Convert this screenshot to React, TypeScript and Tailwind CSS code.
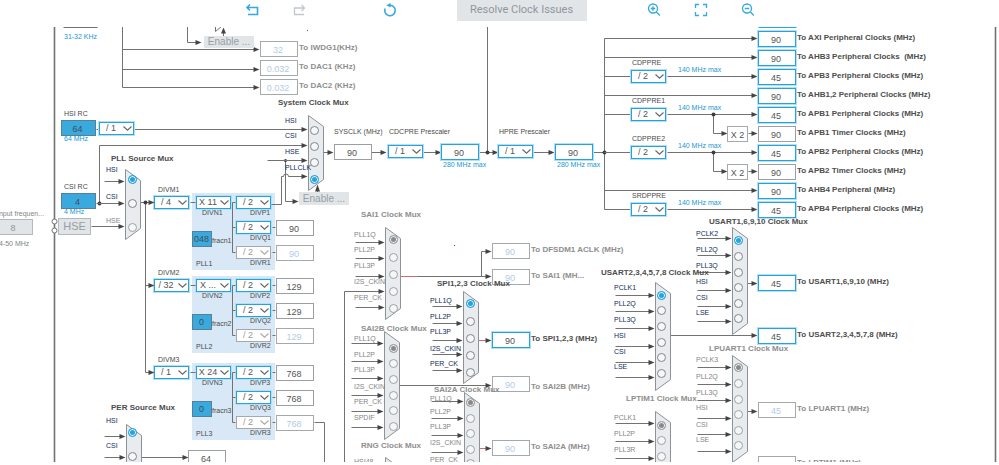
import React from "react";

type Tone = "blue" | "grey" | "off" | "fill" | "muted";

const TEXT = {
  title: "text-[8px] font-bold text-[#4d4d4d]",
  titleOff: "text-[8px] font-bold text-[#8e8e8e]",
  small: "text-[7px] text-[#4a4a4a]",
  smallOff: "text-[7px] text-[#858585]",
  navy: "text-[7px] text-[#122c5a]",
  hint: "text-[7px] text-[#1797d3]",
};

/* Text placed on the canvas; y is the vertical centre of the line. */
function Text({
  x,
  y,
  kind,
  htmlFor,
  children,
}: {
  x: number;
  y: number;
  kind: keyof typeof TEXT;
  htmlFor?: string;
  children: React.ReactNode;
}) {
  const className = `absolute z-10 leading-[10px] whitespace-pre ${TEXT[kind]}`;
  const style = { left: x, top: y - 5 };
  return htmlFor ? (
    <label htmlFor={htmlFor} className={className} style={style}>
      {children}
    </label>
  ) : (
    <span className={className} style={style}>
      {children}
    </span>
  );
}

const BOX: Record<Tone, string> = {
  blue: "w-[38px] border-[#25a3dd] bg-white text-[#555555] shadow-[0_0_0_1px_#b5dff3]",
  grey: "w-[38px] border-[#9a9fa3] bg-white text-[#555555]",
  off: "w-[38px] border-[#a3a9ad] bg-white text-[#b3cbe6]",
  fill: "w-[35px] border-[#587f94] bg-[#3aa9dd] text-[#3f4f5a]",
  muted: "w-[38px] border-[#b4b9bd] bg-[#e1e5e8] text-[#8e9499]",
};

function Box({ id, tone, value, label }: { id?: string; tone: Tone; value: string; label?: string }) {
  return (
    <input
      id={id}
      aria-label={label}
      defaultValue={value}
      disabled={tone === "off" || tone === "muted"}
      className={`block h-4 shrink-0 border pt-px pr-[2px] text-center text-[9px] leading-none ${BOX[tone]}`}
    />
  );
}

function Divider({ id, value, off }: { id: string; value: string; off?: boolean }) {
  return (
    <div className="relative h-[13px] w-[35px] shrink-0">
      <select
        id={id}
        disabled={off}
        defaultValue={value}
        className={`block h-full w-full appearance-none border bg-white pr-[11px] text-center text-[9px] leading-none opacity-100 [text-align-last:center] ${
          off
            ? "border-[#a3a9ad] text-[#9a9a9a]"
            : "border-[#25a3dd] text-[#555555] shadow-[0_0_0_1px_#b5dff3]"
        }`}
      >
        <option>{value}</option>
      </select>
      <svg
        viewBox="0 0 9 5"
        className={`pointer-events-none absolute top-1 right-[2px] h-[5px] w-[9px] ${
          off ? "text-[#a9a9a9]" : "text-[#666666]"
        }`}
      >
        <path d="M0.5 0.5 L4.5 4.2 L8.5 0.5" fill="none" stroke="currentColor" strokeWidth="1.1" />
      </svg>
    </div>
  );
}

/* A node of the diagram: its parts are stacked from the given corner. */
function Node({
  x,
  y,
  className = "flex-col",
  children,
}: {
  x: number;
  y: number;
  className?: string;
  children: React.ReactNode;
}) {
  return (
    <div className={`absolute flex whitespace-pre ${className}`} style={{ left: x, top: y }}>
      {children}
    </div>
  );
}

/* name, label y, wire y, radio y, optional wire start */
type Row = [string, number, number, number, number?];

type MuxData = {
  id: string;
  title: string;
  tx: number;
  ty: number;
  x: number;
  top: number;
  bottom: number;
  cx: number;
  lx: number;
  from: number;
  sel: number;
  off?: boolean;
  rows: Row[];
};

const MUXES: MuxData[] = [
  {
    id: "system", title: "System Clock Mux", tx: 278, ty: 103, x: 308, top: 115, bottom: 190, cx: 314, lx: 285, from: 134, sel: 3,
    rows: [["HSI", 121, 129, 130], ["CSI", 136, 145, 146, 99], ["HSE", 152, 160, 162, 267], ["PLLCLK", 168, 176, 179, 288]],
  },
  {
    id: "pll", title: "PLL Source Mux", tx: 111, ty: 159, x: 125, top: 169, bottom: 239, cx: 132, lx: 106, from: 104, sel: 0,
    rows: [["HSI", 170, 181, 179], ["CSI", 197, 203, 203, 96], ["HSE", 221, 226, 227, 91]],
  },
  {
    id: "per", title: "PER Source Mux", tx: 111, ty: 408, x: 126, top: 424, bottom: 495, cx: 132, lx: 106, from: 104, sel: 0,
    rows: [["HSI", 421, 436, 432], ["CSI", 446, 457, 456]],
  },
  {
    id: "sai1", title: "SAI1 Clock Mux", tx: 361, ty: 215, x: 385, top: 227, bottom: 319, cx: 393, lx: 354, from: 355, sel: 0, off: true,
    rows: [["PLL1Q", 235, 242, 239], ["PLL2P", 250, 258, 257], ["PLL3P", 266, 276, 274], ["I2S_CKIN", 282, 291, 291, 344], ["PER_CK", 298, 307, 308]],
  },
  {
    id: "sai2b", title: "SAI2B Clock Mux", tx: 361, ty: 329, x: 384, top: 331, bottom: 439, cx: 393, lx: 354, from: 351, sel: 0, off: true,
    rows: [["PLL1Q", 339, 343, 348], ["PLL2P", 355, 361, 363], ["PLL3P", 370, 378, 379], ["I2S_CKIN", 387, 395, 395], ["PER_CK", 402, 411, 410], ["SPDIF", 418, 427, 426]],
  },
  {
    id: "rng", title: "RNG Clock Mux", tx: 361, ty: 446, x: 385, top: 457, bottom: 530, cx: 393, lx: 354, from: 355, sel: 0, off: true,
    rows: [["HSI48", 462, 470, 470]],
  },
  {
    id: "spi", title: "SPI1,2,3 Clock Mux", tx: 437, ty: 284, x: 463, top: 291, bottom: 383, cx: 470, lx: 430, from: 432, sel: 0,
    rows: [["PLL1Q", 301, 306, 303], ["PLL2P", 317, 323, 321], ["PLL3P", 332, 340, 338], ["I2S_CKIN", 349, 354, 355], ["PER_CK", 364, 370, 372]],
  },
  {
    id: "sai2a", title: "SAI2A Clock Mux", tx: 434, ty: 390, x: 464, top: 392, bottom: 500, cx: 470, lx: 430, from: 431, sel: 0, off: true,
    rows: [["PLL1Q", 399, 401, 402], ["PLL2P", 412, 418, 418], ["PLL3P", 427, 435, 433], ["I2S_CKIN", 443, 452, 449], ["PER_CK", 460, 469, 463]],
  },
  {
    id: "usart2", title: "USART2,3,4,5,7,8 Clock Mux", tx: 601, ty: 273, x: 655, top: 282, bottom: 390, cx: 661, lx: 614, from: 615, sel: 0,
    rows: [["PCLK1", 288, 295, 295], ["PLL2Q", 304, 311, 310], ["PLL3Q", 320, 328, 326], ["HSI", 336, 346, 342], ["CSI", 352, 362, 357], ["LSE", 367, 377, 373]],
  },
  {
    id: "usart1", title: "USART1,6,9,10 Clock Mux", tx: 709, ty: 222, x: 732, top: 227, bottom: 334, cx: 738, lx: 696, from: 697, sel: 0,
    rows: [["PCLK2", 234, 238, 240], ["PLL2Q", 250, 255, 256], ["PLL3Q", 266, 272, 272], ["HSI", 282, 290, 287], ["CSI", 298, 306, 303], ["LSE", 313, 321, 318]],
  },
  {
    id: "lpuart1", title: "LPUART1 Clock Mux", tx: 709, ty: 349, x: 732, top: 355, bottom: 462, cx: 738, lx: 696, from: 697, sel: 0, off: true,
    rows: [["PCLK3", 360, 367, 367], ["PLL2Q", 377, 384, 383], ["PLL3Q", 393, 400, 399], ["HSI", 408, 418, 414], ["CSI", 425, 434, 430], ["LSE", 440, 451, 445]],
  },
  {
    id: "lptim1", title: "LPTIM1 Clock Mux", tx: 626, ty: 399, x: 655, top: 411, bottom: 518, cx: 661, lx: 614, from: 615, sel: 0, off: true,
    rows: [["PCLK1", 418, 423, 425], ["PLL2P", 434, 441, 440], ["PLL3R", 450, 458, 456]],
  },
];

/* text, x, y, value, tone */
const OUTPUTS: [string, number, number, string, Tone][] = [
  ["To IWDG1(KHz)", 260, 41, "32", "off"],
  ["To DAC1 (KHz)", 260, 60, "0.032", "off"],
  ["To DAC2 (KHz)", 260, 79, "0.032", "off"],
  ["To AXI Peripheral Clocks (MHz)", 758, 31, "90", "blue"],
  ["To AHB3 Peripheral Clocks  (MHz)", 758, 50, "90", "blue"],
  ["To APB3 Peripheral Clocks (MHz)", 758, 69, "45", "blue"],
  ["To AHB1,2 Peripheral Clocks (MHz)", 758, 88, "90", "blue"],
  ["To APB1 Peripheral Clocks (MHz)", 758, 107, "45", "blue"],
  ["To APB1 Timer Clocks (MHz)", 758, 126, "90", "grey"],
  ["To APB2 Peripheral Clocks (MHz)", 758, 145, "45", "blue"],
  ["To APB2 Timer Clocks (MHz)", 758, 164, "90", "grey"],
  ["To AHB4 Peripheral (MHz)", 758, 183, "90", "blue"],
  ["To APB4 Peripheral Clocks (MHz)", 758, 202, "45", "blue"],
  ["To USART1,6,9,10 (MHz)", 758, 275, "45", "blue"],
  ["To USART2,3,4,5,7,8 (MHz)", 758, 328, "45", "blue"],
  ["To LPUART1 (MHz)", 758, 402, "45", "off"],
  ["To LPTIM1 (MHz)", 758, 456, "45", "off"],
  ["To DFSDM1 ACLK (MHz)", 492, 243, "90", "off"],
  ["To SAI1 (MH...", 492, 269, "90", "off"],
  ["To SPI1,2,3 (MHz)", 492, 332, "90", "blue"],
  ["To SAI2B (MHz)", 492, 376, "90", "off"],
  ["To SAI2A (MHz)", 492, 440, "90", "off"],
];

/* Divider labels, centres and results of each PLL block */
const PLLS = [
  { n: 1, top: 193, m: "/ 4", mult: "X 11", frac: "048", results: ["", "90", "90"] },
  { n: 2, top: 276, m: "/ 32", mult: "X ...", frac: "0", results: ["129", "129", "129"] },
  { n: 3, top: 363, m: "/ 1", mult: "X 24", frac: "0", results: ["768", "768", "768"] },
];

/* label, x, y of the label, value, gap under the label */
const PRESCALERS: [string, number, number, string, string][] = [
  ["CDCPRE Prescaler", 388, 127, "/ 1", "gap-2"],
  ["HPRE Prescaler", 498, 127, "/ 1", "gap-2"],
  ["CDPPRE", 631, 58, "/ 2", "gap-[2px]"],
  ["CDPPRE1", 631, 96, "/ 2", "gap-[2px]"],
  ["CDPPRE2", 631, 134, "/ 2", "gap-[2px]"],
  ["SRDPPRE", 631, 191, "/ 2", "gap-[2px]"],
];

const HINTS: [string, number, number][] = [
  ["31-32 KHz", 64, 37],
  ["280 MHz max", 443, 165],
  ["280 MHz max", 557, 165],
  ["140 MHz max", 678, 70],
  ["140 MHz max", 678, 108],
  ["140 MHz max", 678, 146],
  ["140 MHz max", 678, 203],
];

/* Wires from the HPRE bus: plain branches and those through a divider */
const BRANCHES = [38, 57, 95, 190];
const DIVIDED = [76, 114, 152, 209];

function Arrow({ from, to, y }: { from: number; to: number; y: number }) {
  return (
    <>
      <path d={`M${from} ${y}H${to - 4}`} />
      <path d={`M${to} ${y}l-6 -2.5v5z`} fill="#444444" stroke="none" />
    </>
  );
}

function Dot({ x, y, r = 2 }: { x: number; y: number; r?: number }) {
  return <circle cx={x} cy={y} r={r} fill="#3d3d3d" stroke="none" />;
}

function Wires() {
  return (
    <svg
      width="999"
      height="480"
      viewBox="0 0 999 480"
      className="pointer-events-none absolute top-0 left-0 overflow-visible"
    >
      <g transform="translate(0.5 0.5)" fill="none" stroke="#727272" strokeWidth="1">
        <path d="M54 20V480M995 20V480" strokeWidth="1.6" />
        <path d="M63 27H97" />
        <path d="M758 27H796" stroke="#25a3dd" />
        <path d="M122 20V87" />
        <Arrow from={122} to={259} y={49} />
        <Arrow from={122} to={259} y={69} />
        <Arrow from={122} to={259} y={87} />
        <path d="M187 20V42" />
        <Arrow from={187} to={201} y={42} />
        <path d="M215 20V31L221 26M223 36V30" />
        <path d="M223 27l-2.5 6h5z" fill="#444444" stroke="none" />

        <path d="M96 129H99M99 145V203" />
        <path d="M285 160V201" />
        <Arrow from={285} to={298} y={201} />
        <path d="M271 204H281V176H283a2.5 2.5 0 0 1 5 0" />
        <path d="M317 192V188" />
        <path d="M317 184l-2.5 7h5z" fill="#444444" stroke="none" />
        <Dot x={285} y={160} r={1.5} />
        <Dot x={99} y={203} />

        <Arrow from={323} to={333} y={152} />
        <Arrow from={371} to={386} y={152} />
        <Arrow from={423} to={441} y={152} />
        <Arrow from={479} to={498} y={152} />
        <Arrow from={533} to={554} y={152} />
        <path d="M487 20V152M593 152H604M604 38V209" />
        <Dot x={487} y={152} />
        <Dot x={604} y={152} />
        {BRANCHES.map((y) => (
          <Arrow key={y} from={604} to={757} y={y} />
        ))}
        {DIVIDED.map((y) => (
          <g key={y}>
            <path d={`M604 ${y}H630`} />
            <Arrow from={667} to={757} y={y} />
          </g>
        ))}
        <path d="M713 114V133M713 152V171" />
        <Dot x={713} y={114} />
        <Dot x={713} y={152} />
        <Arrow from={713} to={727} y={133} />
        <Arrow from={713} to={727} y={171} />
        <Arrow from={748} to={757} y={133} />
        <Arrow from={748} to={757} y={171} />

        <Arrow from={140} to={154} y={202} />
        <path d="M145 202V372" />
        <Arrow from={145} to={154} y={285} />
        <Arrow from={145} to={154} y={372} />
        <Dot x={145} y={202} />
        {PLLS.map((p) => {
          const y = p.top + 9;
          return (
            <g key={p.n}>
              <path d={`M190 ${y}H195M232 ${y}H235M232 ${y}V${y + 50}`} />
              <path d={`M232 ${y + 25}H235M232 ${y + 50}H235`} />
              <path d={`M272 ${y + 25}H275M272 ${y + 50}H275`} />
              {p.results[0] && <path d={`M272 ${y}H275`} />}
            </g>
          );
        })}
        <path d="M314 422H324V480M344 291V480" />
        <Arrow from={140} to={188} y={457} />

        <path d="M400 276H416" stroke="#cf6d78" />
        <Arrow from={416} to={491} y={276} />
        <path d="M481 276V251" />
        <Arrow from={481} to={491} y={251} />
        <path d="M478 340H486M479 448H486" stroke="#cf6d78" />
        <Arrow from={486} to={491} y={340} />
        <Arrow from={486} to={491} y={448} />
        <Arrow from={399} to={491} y={385} />
        <Arrow from={747} to={757} y={283} />
        <Arrow from={670} to={757} y={335} />
        <Arrow from={747} to={757} y={411} />
        <circle cx="454" cy="245" r="0.7" fill="#c33b49" stroke="none" />
        <circle cx="307" cy="30" r="0.7" fill="#777777" stroke="none" />

        {MUXES.map((m) => (
          <g key={m.id}>
            {m.rows.map(([name, , y, , from]) => (
              <Arrow key={name} from={from ?? m.from} to={m.x - 1} y={y} />
            ))}
            <path
              d={`M${m.x} ${m.top}l15 11V${m.bottom - 11}l-15 11z`}
              fill="#e8ecef"
              stroke="#8d9296"
            />
          </g>
        ))}
        <g fill="#ffffff">
          <circle cx="54" cy="221" r="2.5" />
          <circle cx="54" cy="230" r="2.5" />
        </g>
      </g>
    </svg>
  );
}

function Mux({ m }: { m: MuxData }) {
  return (
    <div role="radiogroup" aria-label={m.title}>
      <Text x={m.tx} y={m.ty} kind={m.off ? "titleOff" : "title"}>
        {m.title}
      </Text>
      {m.rows.map(([name, labelY, , radioY], i) => {
        const id = `${m.id}-${name}`;
        const dim = m.off || (m.id === "pll" && name === "HSE");
        return (
          <React.Fragment key={name}>
            <Text x={m.lx} y={labelY} kind={dim ? "smallOff" : "navy"} htmlFor={id}>
              {name}
            </Text>
            <input
              type="radio"
              id={id}
              name={m.id}
              defaultChecked={i === m.sel}
              disabled={dim}
              className={`absolute size-[9px] appearance-none rounded-full border bg-[#f4f6f7] checked:shadow-[inset_0_0_0_1px_#f4f6f7] ${
                dim
                  ? "border-[#a0a0a0] checked:bg-[#8a8a8a]"
                  : "border-[#858585] checked:border-[#25a3dd] checked:bg-[#25a3dd]"
              }`}
              style={{ left: m.cx - 4, top: radioY - 4 }}
            />
          </React.Fragment>
        );
      })}
    </div>
  );
}

function Pll({ p }: { p: (typeof PLLS)[number] }) {
  return (
    <Node x={154} y={p.top - 8} className="items-start">
      <div className="flex flex-col gap-px">
        <label htmlFor={`divm${p.n}`} className={`pl-1 leading-[10px] ${TEXT.small}`}>{`DIVM${p.n}`}</label>
        <Divider id={`divm${p.n}`} value={p.m} />
      </div>

      <div className="mt-2 ml-[3px] flex h-[77px] w-[83px] gap-1 bg-[#d9e8f6] pt-[3px]">
        <div className="flex w-10 flex-col">
          <div className="pl-1">
            <Divider id={`divn${p.n}`} value={p.mult} />
          </div>
          <label htmlFor={`divn${p.n}`} className={`pl-[10px] leading-2 ${TEXT.small}`}>{`DIVN${p.n}`}</label>
          <div className="mt-[14px] flex items-end">
            <input
              id={`fracn${p.n}`}
              defaultValue={p.frac}
              className="h-4 w-5 shrink-0 border border-[#587f94] bg-[#3aa9dd] pr-px text-center text-[9px] leading-none text-[#3f4f5a]"
            />
            <label htmlFor={`fracn${p.n}`} className={`leading-[12px] ${TEXT.small}`}>{`fracn${p.n}`}</label>
          </div>
          <span className={`mt-auto pb-px pl-1 leading-[10px] ${TEXT.small}`}>{`PLL${p.n}`}</span>
        </div>
        <div className="flex flex-col gap-1">
          {["P", "Q", "R"].map((c, i) => (
            <div key={c} className="flex flex-col">
              <Divider id={`div${c}${p.n}`} value="/ 2" off={i === 2} />
              <label htmlFor={`div${c}${p.n}`} className={`pl-[14px] leading-2 ${TEXT.small}`}>
                {`DIV${c}${p.n}`}
              </label>
            </div>
          ))}
        </div>
      </div>

      <div className="mt-[10px] ml-px flex flex-col gap-[9px]">
        {p.results.map((value, i) =>
          value ? (
            <Box key={i} tone={i === 2 ? "off" : "grey"} value={value} label={`PLL${p.n} ${"PQR"[i]} (MHz)`} />
          ) : (
            <div key={i} className="h-4" />
          )
        )}
      </div>
    </Node>
  );
}

function ToolButton({ label, off, children }: { label: string; off?: boolean; children: React.ReactNode }) {
  return (
    <button
      type="button"
      aria-label={label}
      disabled={off}
      className={`size-[14px] shrink-0 ${off ? "text-[#c4c8cb]" : "text-[#35a9de]"}`}
    >
      <svg viewBox="0 0 14 14" className="size-full" fill="none" stroke="currentColor" strokeWidth="1.3">
        {children}
      </svg>
    </button>
  );
}

function Toolbar() {
  return (
    <header className="flex h-[27px] shrink-0 items-start justify-center">
      <div className="flex gap-[33px] pt-[3px]">
        <ToolButton label="Undo">
          <path d="M5 1.5 2 4.5 5 7.5M2 4.5H12.5V11.5H3" strokeWidth="1.6" />
        </ToolButton>
        <ToolButton label="Redo" off>
          <path d="M9.5 2 12.5 5 9.5 8M12.5 5H2.5V11.5H12" />
        </ToolButton>
      </div>
      <div className="ml-[77px] flex pt-[3px]">
        <ToolButton label="Reset">
          <path d="M7 2.3A5.2 5.2 0 1 1 2.2 5.5" strokeWidth="1.6" />
          <path d="M3.2 2.3 7.6 0V4.6z" fill="currentColor" stroke="none" />
        </ToolButton>
      </div>
      <button
        type="button"
        disabled
        className="mx-[60px] h-[21px] w-[130px] bg-[#e1e5e8] font-[Roboto,'Liberation_Sans',sans-serif] text-[11px] whitespace-nowrap text-[#8f979d]"
      >
        Resolve Clock Issues
      </button>
      <div className="flex gap-[33px] pt-[3px]">
        <ToolButton label="Zoom in">
          <circle cx="6" cy="5.5" r="4.5" />
          <path d="M9.2 8.7 12.8 12.5M3.8 5.5H8.2M6 3.3V7.7" />
        </ToolButton>
        <ToolButton label="Fit to window">
          <path d="M1.5 5V1.5H5M9 1.5H12.5V5M12.5 9V12.5H9M5 12.5H1.5V9" />
        </ToolButton>
        <ToolButton label="Zoom out">
          <circle cx="6" cy="5.5" r="4.5" />
          <path d="M9.2 8.7 12.8 12.5M3.8 5.5H8.2" />
        </ToolButton>
      </div>
    </header>
  );
}

const GREY_BUTTON = "border bg-[#e1e5e8] leading-none text-[#989ea3]";

export default function App() {
  return (
    <div className="flex h-screen flex-col bg-white pb-[3px] font-['Liberation_Sans',Arial,sans-serif]">
      <Toolbar />
      <main className="relative flex-1 overflow-hidden">
        {/* The plane is scrolled up under the toolbar */}
        <div className="absolute -top-[27px] left-0">
          {PLLS.map((p) => (
            <Pll key={p.n} p={p} />
          ))}
          <Wires />
          {MUXES.map((m) => (
            <Mux key={m.id} m={m} />
          ))}
          {PRESCALERS.map(([label, x, y, value, gap]) => (
            <Node key={label} x={x} y={y} className={`flex-col ${gap}`}>
              <label htmlFor={label} className={`pl-px leading-[10px] ${TEXT.small}`}>
                {label}
              </label>
              <Divider id={label} value={value} />
            </Node>
          ))}
          {OUTPUTS.map(([text, x, y, value, tone]) => (
            <Node
              key={text}
              x={x}
              y={y}
              className={`gap-px ${text.startsWith("To SAI2B") ? "items-end" : "items-start"}`}
            >
              <Box id={text} tone={tone} value={value} />
              <label
                htmlFor={text}
                className={`pt-[2px] leading-[10px] ${tone === "off" ? TEXT.titleOff : TEXT.title}`}
              >
                {text}
              </label>
            </Node>
          ))}
          {HINTS.map(([text, x, y]) => (
            <Text key={`${x}-${y}`} x={x} y={y} kind="hint">
              {text}
            </Text>
          ))}

          {[
            { name: "HSI RC", value: "64", hint: "64 MHz", y: 109 },
            { name: "CSI RC", value: "4", hint: "4 MHz", y: 182 },
          ].map((s) => (
            <Node key={s.name} x={61} y={s.y} className="flex-col gap-px">
              <label htmlFor={s.name} className={`pl-[3px] leading-[10px] ${TEXT.small}`}>
                {s.name}
              </label>
              <Box id={s.name} tone="fill" value={s.value} />
              <span className={`pl-[3px] leading-1 ${TEXT.hint}`}>{s.hint}</span>
            </Node>
          ))}
          <Node x={99} y={122}>
            <Divider id="hsi-divider" value="/ 1" />
          </Node>

          <Node x={-5} y={209}>
            <label htmlFor="input-frequency" className={`pl-[2px] leading-[10px] ${TEXT.smallOff}`}>
              Input frequen...
            </label>
            <Box id="input-frequency" tone="muted" value="8" />
            <span className={`pt-1 pl-1 leading-[10px] ${TEXT.smallOff}`}>4-50 MHz</span>
          </Node>

          <Node x={334} y={127} className="flex-col gap-[7px]">
            <label htmlFor="sysclk" className={`leading-[10px] ${TEXT.small}`}>
              SYSCLK (MHz)
            </label>
            <Box id="sysclk" tone="grey" value="90" />
          </Node>
          <Node x={441} y={144}>
            <Box tone="blue" value="90" label="CDCPRE output (MHz)" />
          </Node>
          <Node x={555} y={144}>
            <Box tone="blue" value="90" label="HPRE output (MHz)" />
          </Node>
          <Node x={188} y={450}>
            <Box tone="grey" value="64" label="PER clock (MHz)" />
          </Node>

          {[126, 164].map((y) => (
            <Node key={y} x={727} y={y}>
              <span className="h-4 w-[21px] border border-[#a3a9ad] bg-white text-center text-[9px] leading-4 text-[#555555]">
                X 2
              </span>
            </Node>
          ))}

          <Node x={58} y={218}>
            <button type="button" className={`h-[17px] w-[33px] border-[#b4b9bd] text-[11px] ${GREY_BUTTON}`}>
              HSE
            </button>
          </Node>
          <Node x={204} y={36}>
            <button type="button" className={`h-3 w-[50px] border-[#e1e5e8] text-[10px] ${GREY_BUTTON}`}>
              Enable ...
            </button>
          </Node>
          <Node x={299} y={192}>
            <button type="button" className={`h-[13px] w-[50px] border-[#e1e5e8] text-[10px] ${GREY_BUTTON}`}>
              Enable ...
            </button>
          </Node>
        </div>
      </main>
    </div>
  );
}
